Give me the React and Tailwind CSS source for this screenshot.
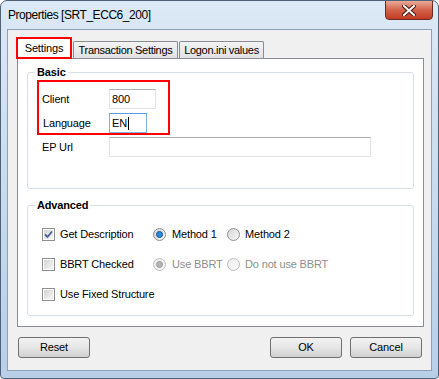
import React from 'react';

const font = { fontFamily: '"Liberation Sans", Arial, sans-serif' };

const Checkbox = ({ checked }) => (
  <div className="w-[13px] h-[13px] border border-[#8e8f8f] bg-white p-[1px] shrink-0">
    <div className="w-full h-full bg-gradient-to-br from-[#d4d4d4] to-[#f7f7f7] flex items-center justify-center">
      {checked && (
        <svg width="9" height="9" viewBox="0 0 9 9">
          <path d="M1 4.5 L3.5 7 L8 1.5" fill="none" stroke="#4a5f97" strokeWidth="1.8" />
        </svg>
      )}
    </div>
  </div>
);

const Radio = ({ checked, disabled }) => (
  <div
    className={`w-[13px] h-[13px] rounded-full border shrink-0 flex items-center justify-center bg-gradient-to-br ${
      disabled ? 'border-[#bcbcbc] from-[#ececec] to-[#fbfbfb]' : 'border-[#8e8f8f] from-[#d6d6d6] to-[#f8f8f8]'
    }`}
  >
    {checked && (
      <div
        className={`w-[7px] h-[7px] rounded-full border ${
          disabled ? 'bg-[#b4b4b4] border-[#9a9a9a]' : 'bg-[#2a8be0] border-[#1a4f86]'
        }`}
      />
    )}
  </div>
);

const Button = ({ children, className = '' }) => (
  <div
    className={`h-[21px] w-[72px] rounded-[3px] border border-[#707070] flex items-center justify-center text-[11px] text-black bg-gradient-to-b from-[#f2f2f2] via-[#e6e6e6] to-[#d0d0d0] ${className}`}
  >
    {children}
  </div>
);

const TextBox = ({ w, value, focused, caret }) => (
  <div
    className={`h-[20px] ${w} border flex items-center pl-[2px] bg-white text-[11px] ${
      focused ? 'border-[#7eb4ea] border-t-[#569de5]' : 'border-[#e2e3ea] border-t-[#abadb3]'
    }`}
  >
    {value}
    {caret && <span className="w-[1px] h-[13px] bg-black ml-[1px]" />}
  </div>
);

export default function App() {
  return (
    <div
      className="w-[439px] h-[379px] rounded-t-[7px] rounded-b-[4px] border border-[#4f6277] bg-gradient-to-b from-[#dce9f6] via-[#c8dbef] to-[#b8cfe8] flex flex-col relative overflow-hidden"
      style={font}
    >
      {/* title bar */}
      <div className="h-[28px] flex items-center pl-[7px] text-[12px] tracking-[-0.45px] text-black">
        Properties [SRT_ECC6_200]
      </div>
      <div className="absolute top-[-1px] right-[5px] w-[48px] h-[20px] rounded-b-[4px] border border-[#6a2b22] bg-gradient-to-b from-[#e9a99a] via-[#d2624a] to-[#c23a22] flex items-center justify-center">
        <svg width="14" height="11" viewBox="0 0 14 11">
          <path d="M2 1 L12 10 M12 1 L2 10" stroke="#4a1a14" strokeWidth="4" strokeLinecap="square" />
          <path d="M2 1 L12 10 M12 1 L2 10" stroke="#ffffff" strokeWidth="2" strokeLinecap="square" />
        </svg>
      </div>

      {/* client area */}
      <div className="ml-[6px] mr-[6px] mb-[7px] flex-1 bg-[#f0f0f0] border border-[#8da0b6] pt-[7px] pl-[8px] flex flex-col tracking-[-0.15px]">
        {/* tabs */}
        <div className="flex items-end h-[22px] -mb-[1px]">
          <div className="relative z-10 w-[56px] h-[22px] border-2 border-[#ff0000] bg-white flex items-center justify-center text-[11px] pt-[1px]">
            Settings
          </div>
          <div className="ml-[1px] w-[105px] h-[17px] mb-[1px] border border-b-0 border-[#898c95] rounded-t-[2px] bg-gradient-to-b from-[#f3f3f3] to-[#e2e2e2] flex items-center justify-center text-[11px] tracking-[-0.3px]">
            Transaction Settings
          </div>
          <div className="ml-[1px] w-[85px] h-[17px] mb-[1px] border border-b-0 border-[#898c95] rounded-t-[2px] bg-gradient-to-b from-[#f3f3f3] to-[#e2e2e2] flex items-center justify-center text-[11px] tracking-[-0.3px]">
            Logon.ini values
          </div>
        </div>

        {/* tab pane */}
        <div className="ml-[1px] w-[407px] h-[269px] border border-[#898c95] bg-white pt-[7px] pl-[9px] flex flex-col text-[11px] text-black">
          <fieldset className="w-[387px] h-[123px] border border-[#d5dfe5] rounded-[3px]">
            <legend className="ml-[7px] px-[2px] font-bold leading-[13px]">Basic</legend>
            <div className="ml-[9px] mt-[1px] w-[133px] h-[55px] border-2 border-[#ff0000] pt-[7px] pl-[3px] flex flex-col gap-[4px]">
              <div className="flex items-center">
                <span className="w-[67px]">Client</span>
                <TextBox w="w-[47px]" value="800" />
              </div>
              <div className="flex items-center">
                <span className="w-[67px] pl-[1px]">Language</span>
                <TextBox w="w-[38px]" value="EN" focused caret />
              </div>
            </div>
            <div className="ml-[14px] mt-[2px] flex items-center">
              <span className="w-[67px]">EP Url</span>
              <TextBox w="w-[262px]" value="" />
            </div>
          </fieldset>

          <fieldset className="mt-[10px] w-[387px] h-[117px] border border-[#d5dfe5] rounded-[3px]">
            <legend className="ml-[7px] px-[2px] font-bold leading-[13px]">Advanced</legend>
            <div className="ml-[14px] mt-[12px] flex flex-col gap-[10px]">
              <div className="flex items-center h-[20px]">
                <div className="w-[111px] flex items-center gap-[5px]">
                  <Checkbox checked />
                  <span>Get Description</span>
                </div>
                <div className="w-[74px] flex items-center gap-[6px]">
                  <Radio checked />
                  <span>Method 1</span>
                </div>
                <div className="flex items-center gap-[5px]">
                  <Radio />
                  <span>Method 2</span>
                </div>
              </div>
              <div className="flex items-center h-[20px]">
                <div className="w-[111px] flex items-center gap-[5px]">
                  <Checkbox />
                  <span>BBRT Checked</span>
                </div>
                <div className="w-[74px] flex items-center gap-[6px] text-[#8d8d8d]">
                  <Radio checked disabled />
                  <span>Use BBRT</span>
                </div>
                <div className="flex items-center gap-[5px] text-[#8d8d8d]">
                  <Radio disabled />
                  <span>Do not use BBRT</span>
                </div>
              </div>
              <div className="flex items-center h-[20px]">
                <div className="flex items-center gap-[5px]">
                  <Checkbox />
                  <span>Use Fixed Structure</span>
                </div>
              </div>
            </div>
          </fieldset>
        </div>

        {/* buttons */}
        <div className="mt-[10px] flex items-center pl-[2px]">
          <Button>Reset</Button>
          <Button className="ml-[180px]">OK</Button>
          <Button className="ml-[8px]">Cancel</Button>
        </div>
      </div>
    </div>
  );
}
